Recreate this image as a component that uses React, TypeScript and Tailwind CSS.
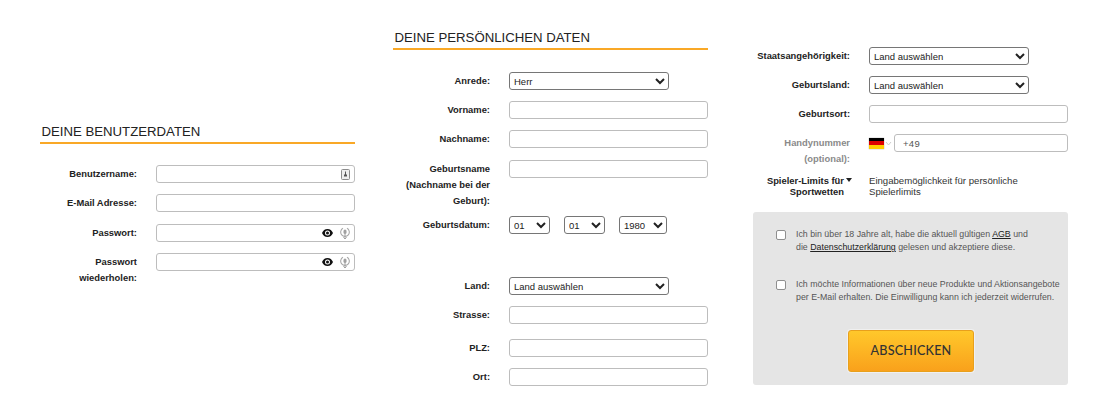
import type { ReactNode } from "react";

const inputCls = "block h-[18px] w-[199px] shrink-0 rounded-[3px] border border-[#bdbdbd] bg-white px-2 text-[11px] text-[#333] outline-none";
const selectCls = "block h-[18px] shrink-0 rounded-[3px] border border-[#767676] bg-white text-[9.5px] text-[#222] outline-none";

function Heading({ children }: { children: ReactNode }) {
    return (
        <h2 className="h-[20px] border-b-2 border-[#f9a826] pl-[1.5px] text-[13.2px] leading-[15px] text-[#222]">{children}</h2>
    );
}

function Row({ label, children, className = "", muted = false }: { label: ReactNode; children: ReactNode; className?: string; muted?: boolean }) {
    return (
        <div className={`flex items-start ${className}`}>
            <div className={`w-[97px] mr-[19px] shrink-0 pt-[1px] text-right text-[9.4px] font-bold leading-[16px] ${muted ? "text-[#8a8a8a]" : "text-[#222]"}`}>{label}</div>
            {children}
        </div>
    );
}

function EyeIcon() {
    return (
        <svg width="11" height="8" viewBox="0 0 22 16" className="shrink-0">
            <path fill="#111" d="M11 0C6 0 1.700 3.300 0 8c1.700 4.700 6 8 11 8s9.300-3.300 11-8c-1.700-4.700-6-8-11-8zm0 13a5 5 0 1 1 0-10 5 5 0 0 1 0 10zm0-8a3 3 0 1 0 0 6 3 3 0 0 0 0-6z" />
        </svg>
    );
}

function GenerateIcon() {
    return (
        <svg width="10" height="13" viewBox="0 0 10 13" className="shrink-0" fill="none">
            <path d="M3 1.300a4.300 4.300 0 1 0 4 0" stroke="#a8a8a8" strokeWidth="1.100" />
            <rect x="3.500" y="2.500" width="3" height="4.500" rx="1.500" fill="#a0a0a0" />
            <path d="M5 7v5M3.400 10.400 5 12l1.600-1.600" stroke="#a0a0a0" strokeWidth="1" />
        </svg>
    );
}

function KeyIcon() {
    return (
        <svg width="9" height="11" viewBox="0 0 9 11" className="mr-[0.5px] shrink-0" fill="none">
            <rect x="0.500" y="0.500" width="8" height="10" rx="1" fill="#eee" stroke="#8c8c8c" />
            <path d="M4.500 2.500v4" stroke="#555" strokeWidth="1" />
            <rect x="3" y="5.500" width="3" height="2" fill="#555" />
        </svg>
    );
}

function IconInput({ children }: { children: ReactNode }) {
    return (
        <div className="relative w-[199px] shrink-0">
            <input type="text" className={inputCls} />
            <div className="absolute inset-y-0 right-[5px] flex items-center gap-[7px]">{children}</div>
        </div>
    );
}

function LandSelect() {
    return (
        <select className={`${selectCls} w-[160px]`} defaultValue="Land auswählen">
            <option>Land auswählen</option>
            <option>Deutschland</option>
        </select>
    );
}

function Consent({ children, className = "" }: { children: ReactNode; className?: string }) {
    return (
        <label className={`flex items-start ${className}`}>
            <input type="checkbox" className="mt-[2px] mr-[10px] h-[10px] w-[10px] shrink-0 appearance-none rounded-[2px] border border-[#8f8f8f] bg-white" />
            <span className="text-[8.8px] leading-[13px] whitespace-nowrap text-[#555]">{children}</span>
        </label>
    );
}

export default function App() {
    return (
        <div className="flex h-[420px] w-[1100px] items-start overflow-hidden bg-white pl-[40px] font-['Liberation_Sans',Arial,sans-serif]">
            {/* Benutzerdaten */}
            <section className="mt-[124px] w-[315px] shrink-0">
                <Heading>DEINE BENUTZERDATEN</Heading>
                <div className="mt-[21px] flex flex-col">
                    <Row label="Benutzername:">
                        <IconInput><KeyIcon /></IconInput>
                    </Row>
                    <Row label="E-Mail Adresse:" className="mt-[11px]">
                        <input type="text" className={inputCls} />
                    </Row>
                    <Row label="Passwort:" className="mt-[12px]">
                        <IconInput><EyeIcon /><GenerateIcon /></IconInput>
                    </Row>
                    <Row label={<>Passwort<br />wiederholen:</>} className="mt-[11px]">
                        <IconInput><EyeIcon /><GenerateIcon /></IconInput>
                    </Row>
                </div>
            </section>

            {/* Persönliche Daten */}
            <section className="ml-[38px] mt-[30px] w-[315px] shrink-0">
                <Heading>DEINE PERSÖNLICHEN DATEN</Heading>
                <div className="mt-[22px] flex flex-col">
                    <Row label="Anrede:">
                        <select className={`${selectCls} w-[160px]`} defaultValue="Herr">
                            <option>Herr</option>
                            <option>Frau</option>
                        </select>
                    </Row>
                    <Row label="Vorname:" className="mt-[11px]">
                        <input type="text" className={inputCls} />
                    </Row>
                    <Row label="Nachname:" className="mt-[11px]">
                        <input type="text" className={inputCls} />
                    </Row>
                    <Row label={<>Geburtsname<br />(Nachname bei der<br />Geburt):</>} className="mt-[12px]">
                        <input type="text" className={inputCls} />
                    </Row>
                    <Row label="Geburtsdatum:" className="mt-[7px]">
                        <div className="flex gap-[14px]">
                            <select className={`${selectCls} w-[41px]`} defaultValue="01"><option>01</option></select>
                            <select className={`${selectCls} w-[41px]`} defaultValue="01"><option>01</option></select>
                            <select className={`${selectCls} w-[48px]`} defaultValue="1980"><option>1980</option></select>
                        </div>
                    </Row>
                    <Row label="Land:" className="mt-[43px]">
                        <LandSelect />
                    </Row>
                    <Row label="Strasse:" className="mt-[11px]">
                        <input type="text" className={inputCls} />
                    </Row>
                    <Row label="PLZ:" className="mt-[15px]">
                        <input type="text" className={inputCls} />
                    </Row>
                    <Row label="Ort:" className="mt-[11px]">
                        <input type="text" className={inputCls} />
                    </Row>
                </div>
            </section>

            {/* Weitere Angaben */}
            <section className="ml-[45px] mt-[47px] w-[315px] shrink-0">
                <div className="flex flex-col">
                    <Row label="Staatsangehörigkeit:">
                        <LandSelect />
                    </Row>
                    <Row label="Geburtsland:" className="mt-[11px]">
                        <LandSelect />
                    </Row>
                    <Row label="Geburtsort:" className="mt-[11px]">
                        <input type="text" className={inputCls} />
                    </Row>
                    <Row label={<>Handynummer<br />(optional):</>} muted className="mt-[11px]">
                        <div className="flex w-[199px] shrink-0 items-center">
                            <div className="flex h-[11px] w-[15px] shrink-0 flex-col shadow-[0_0_1px_#888]">
                                <div className="flex-1 bg-black" />
                                <div className="flex-1 bg-[#dd0000]" />
                                <div className="flex-1 bg-[#ffce00]" />
                            </div>
                            <svg width="7" height="5" viewBox="0 0 7 5" className="ml-[1px] mr-[2px] shrink-0" fill="none">
                                <path d="M1 1l2.500 3L6 1" stroke="#ccc" />
                            </svg>
                            <input type="text" defaultValue="+49" className="block h-[18px] min-w-0 flex-1 rounded-[3px] border border-[#bdbdbd] bg-white px-2 text-[9.5px] tracking-[0.3px] text-[#555] outline-none" />
                        </div>
                    </Row>
                </div>
                <div className="mt-[8px] flex items-start">
                    <div className="w-[91px] shrink-0 text-right text-[9.4px] font-bold leading-[11px] text-[#222]">
                        Spieler-Limits für<br />Sportwetten
                    </div>
                    <span className="ml-[2px] mr-[17px] mt-[3px] h-0 w-0 shrink-0 border-x-[3px] border-t-[4px] border-x-transparent border-t-[#222]" />
                    <div className="text-[9.6px] leading-[11px] text-[#333]">Eingabemöglichkeit für persönliche<br />Spielerlimits</div>
                </div>
                <div className="mt-[15px] h-[173px] rounded-[3px] bg-[#e5e5e5] pl-[23px] pt-[16px]">
                    <Consent>
                        Ich bin über 18 Jahre alt, habe die aktuell gültigen <a className="text-[#222] underline">AGB</a> und<br />
                        die <a className="text-[#222] underline">Datenschutzerklärung</a> gelesen und akzeptiere diese.
                    </Consent>
                    <Consent className="mt-[24px]">
                        Ich möchte Informationen über neue Produkte und Aktionsangebote<br />
                        per E-Mail erhalten. Die Einwilligung kann ich jederzeit widerrufen.
                    </Consent>
                    <button type="button" className="ml-[72px] mt-[26px] block h-[42px] w-[126px] rounded-[3px] border border-[#e8a01c] bg-gradient-to-b from-[#ffc82b] to-[#f9a11b] font-['Lato',sans-serif] text-[12.6px] font-medium tracking-[0.2px] text-[#333] shadow-[0_0_0_1px_#f0f0f0]">
                        ABSCHICKEN
                    </button>
                </div>
            </section>
        </div>
    );
}
